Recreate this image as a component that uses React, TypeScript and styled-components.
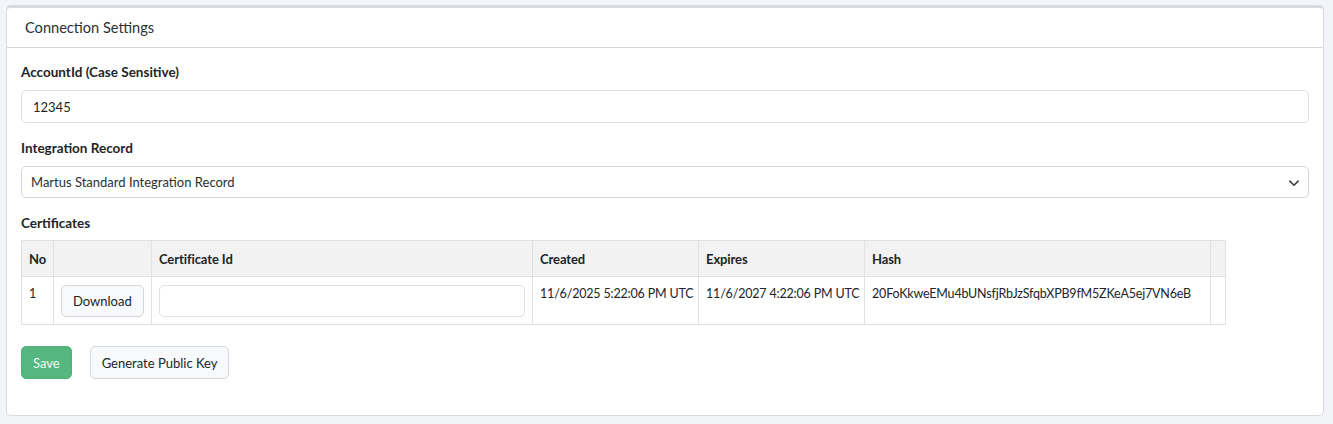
import React from 'react';
import styled, { createGlobalStyle } from 'styled-components';

const GlobalStyle = createGlobalStyle`
  html, body {
    margin: 0;
    padding: 0;
    background: #f3f4f8;
    font-family: Lato, "Liberation Sans", sans-serif;
    color: #212529;
  }
  * { box-sizing: border-box; }
`;

const certificates = [
  {
    no: 1,
    id: '',
    created: '11/6/2025 5:22:06 PM UTC',
    expires: '11/6/2027 4:22:06 PM UTC',
    hash: '20FoKkweEMu4bUNsfjRbJzSfqbXPB9fM5ZKeA5ej7VN6eB',
  },
];

const App: React.FC = () => {
  return (
    <Page>
      <GlobalStyle />
      <Card>
        <CardHeader>Connection Settings</CardHeader>
        <CardBody>
          <Field>
            <Label>AccountId (Case Sensitive)</Label>
            <TextInput defaultValue="12345" />
          </Field>
          <Field>
            <Label>Integration Record</Label>
            <SelectWrap>
              <Select defaultValue="std">
                <option value="std">Martus Standard Integration Record</option>
              </Select>
              <Chevron viewBox="0 0 16 16">
                <path d="M2.5 5.5 8 11l5.5-5.5" fill="none" stroke="#343a40" strokeWidth="2" strokeLinecap="round" strokeLinejoin="round" />
              </Chevron>
            </SelectWrap>
          </Field>
          <Field>
            <Label>Certificates</Label>
            <Table>
              <thead>
                <tr>
                  <Th $w={32}>No</Th>
                  <Th $w={98}></Th>
                  <Th $w={381}>Certificate Id</Th>
                  <Th $w={166}>Created</Th>
                  <Th $w={166}>Expires</Th>
                  <Th $w={346}>Hash</Th>
                  <Th $w={15}></Th>
                </tr>
              </thead>
              <tbody>
                {certificates.map(c => (
                  <tr key={c.no}>
                    <Td>{c.no}</Td>
                    <Td>
                      <LightButton $small>Download</LightButton>
                    </Td>
                    <Td>
                      <CellInput defaultValue={c.id} />
                    </Td>
                    <Td>{c.created}</Td>
                    <Td>{c.expires}</Td>
                    <Td>{c.hash}</Td>
                    <Td></Td>
                  </tr>
                ))}
              </tbody>
            </Table>
          </Field>
          <Actions>
            <SaveButton>Save</SaveButton>
            <LightButton>Generate Public Key</LightButton>
          </Actions>
        </CardBody>
      </Card>
    </Page>
  );
};

const Page = styled.div`
  padding: 5px 9px 9px 6px;
  min-height: 424px;
`;

const Card = styled.div`
  background: #fff;
  border: 1px solid #d9dbe0;
  border-top: 3px solid #d6d9df;
  border-radius: 5px;
`;

const CardHeader = styled.div`
  height: 40px;
  padding: 0 18px;
  display: flex;
  align-items: center;
  font-size: 14.6px;
  color: #2b2f33;
  border-bottom: 1px solid #d6d8dc;
`;

const CardBody = styled.div`
  padding: 16px 14px 36px 14px;
  display: flex;
  flex-direction: column;
`;

const Field = styled.div`
  display: flex;
  flex-direction: column;
  margin-bottom: 17px;
`;

const Label = styled.label`
  font-size: 13.5px;
  font-weight: 700;
  color: #212529;
  margin-bottom: 10px;
  line-height: 16px;
`;

const TextInput = styled.input`
  height: 33px;
  width: 100%;
  padding: 0 11px;
  border: 1px solid #dee1e5;
  border-radius: 5px;
  font-family: inherit;
  font-size: 13px;
  color: #212529;
  outline: none;
`;

const SelectWrap = styled.div`
  position: relative;
`;

const Select = styled.select`
  appearance: none;
  height: 32px;
  width: 100%;
  padding: 0 36px 0 9px;
  border: 1px solid #d2d5da;
  border-radius: 5px;
  background: #fff;
  font-family: inherit;
  font-size: 13px;
  color: #2b2f33;
  outline: none;
`;

const Chevron = styled.svg`
  position: absolute;
  right: 9px;
  top: 11px;
  width: 12px;
  height: 12px;
  pointer-events: none;
`;

const Table = styled.table`
  width: 1204px;
  table-layout: fixed;
  border-collapse: collapse;
  font-size: 12.5px;
  letter-spacing: -0.18px;
  margin-top: -1px;
`;

const Th = styled.th<{ $w: number }>`
  width: ${p => p.$w}px;
  height: 36px;
  padding: 0 7px;
  text-align: left;
  font-weight: 700;
  font-size: 13px;
  letter-spacing: -0.1px;
  background: #f2f2f2;
  border: 1px solid #dfe1e5;
  color: #212529;
`;

const Td = styled.td`
  height: 48px;
  padding: 9px 7px 0;
  vertical-align: top;
  border: 1px solid #dfe1e5;
  color: #212529;
  white-space: nowrap;
`;

const CellInput = styled.input`
  width: 100%;
  height: 32px;
  margin-top: -1px;
  border: 1px solid #dee1e5;
  border-radius: 5px;
  font-family: inherit;
  font-size: 13px;
  outline: none;
`;

const Actions = styled.div`
  display: flex;
  gap: 18px;
  margin-top: 4px;
`;

const BaseButton = styled.button`
  height: 33px;
  padding: 0 11px;
  border-radius: 5px;
  font-family: inherit;
  font-size: 13px;
  letter-spacing: 0;
  cursor: pointer;
`;

const SaveButton = styled(BaseButton)`
  background: #56b67f;
  border: 1px solid #52b27b;
  color: #f2fbf5;
`;

const LightButton = styled(BaseButton)<{ $small?: boolean }>`
  background: #f8f9fa;
  border: 1px solid #d4d7db;
  color: #212529;
  height: ${p => (p.$small ? '32px' : '33px')};
  margin-top: ${p => (p.$small ? '-1px' : '0')};
`;

export default App;
